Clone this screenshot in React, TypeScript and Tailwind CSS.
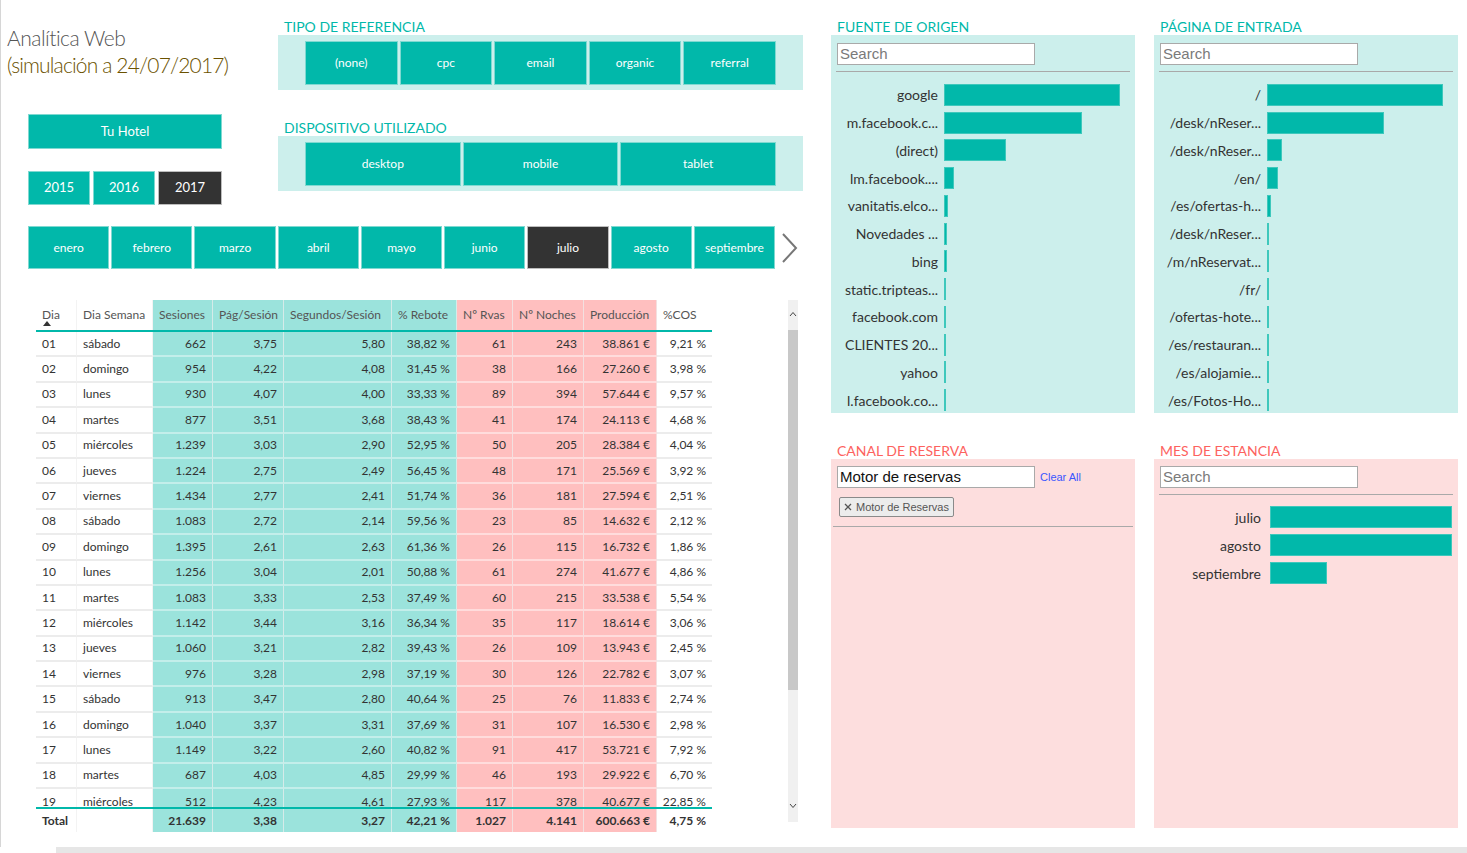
import { ReactNode } from 'react';

const TEAL = 'bg-[#01b8aa]';

type Row = [string, string, string, string, string, string, string, string, string, string];

const rows: Row[] = [
    ['01', 'sábado', '662', '3,75', '5,80', '38,82 %', '61', '243', '38.861 €', '9,21 %'],
    ['02', 'domingo', '954', '4,22', '4,08', '31,45 %', '38', '166', '27.260 €', '3,98 %'],
    ['03', 'lunes', '930', '4,07', '4,00', '33,33 %', '89', '394', '57.644 €', '9,57 %'],
    ['04', 'martes', '877', '3,51', '3,68', '38,43 %', '41', '174', '24.113 €', '4,68 %'],
    ['05', 'miércoles', '1.239', '3,03', '2,90', '52,95 %', '50', '205', '28.384 €', '4,04 %'],
    ['06', 'jueves', '1.224', '2,75', '2,49', '56,45 %', '48', '171', '25.569 €', '3,92 %'],
    ['07', 'viernes', '1.434', '2,77', '2,41', '51,74 %', '36', '181', '27.594 €', '2,51 %'],
    ['08', 'sábado', '1.083', '2,72', '2,14', '59,56 %', '23', '85', '14.632 €', '2,12 %'],
    ['09', 'domingo', '1.395', '2,61', '2,63', '61,36 %', '26', '115', '16.732 €', '1,86 %'],
    ['10', 'lunes', '1.256', '3,04', '2,01', '50,88 %', '61', '274', '41.677 €', '4,86 %'],
    ['11', 'martes', '1.083', '3,33', '2,53', '37,49 %', '60', '215', '33.538 €', '5,54 %'],
    ['12', 'miércoles', '1.142', '3,44', '3,16', '36,34 %', '35', '117', '18.614 €', '3,06 %'],
    ['13', 'jueves', '1.060', '3,21', '2,82', '39,43 %', '26', '109', '13.943 €', '2,45 %'],
    ['14', 'viernes', '976', '3,28', '2,98', '37,19 %', '30', '126', '22.782 €', '3,07 %'],
    ['15', 'sábado', '913', '3,47', '2,80', '40,64 %', '25', '76', '11.833 €', '2,74 %'],
    ['16', 'domingo', '1.040', '3,37', '3,31', '37,69 %', '31', '107', '16.530 €', '2,98 %'],
    ['17', 'lunes', '1.149', '3,22', '2,60', '40,82 %', '91', '417', '53.721 €', '7,92 %'],
    ['18', 'martes', '687', '4,03', '4,85', '29,99 %', '46', '193', '29.922 €', '6,70 %'],
    ['19', 'miércoles', '512', '4,23', '4,61', '27,93 %', '117', '378', '40.677 €', '22,85 %'],
];

const totals: Row = ['Total', '', '21.639', '3,38', '3,27', '42,21 %', '1.027', '4.141', '600.663 €', '4,75 %'];

const headers = ['Dia', 'Dia Semana', 'Sesiones', 'Pág/Sesión', 'Segundos/Sesión', '% Rebote', 'Nº Rvas', 'Nº Noches', 'Producción', '%COS'];

// column widths and tint group: w = white, t = teal, p = pink
const cols: { w: string; tone: 'w' | 't' | 'p' }[] = [
    { w: 'w-[41px]', tone: 'w' },
    { w: 'w-[76px]', tone: 'w' },
    { w: 'w-[60px]', tone: 't' },
    { w: 'w-[71px]', tone: 't' },
    { w: 'w-[108px]', tone: 't' },
    { w: 'w-[65px]', tone: 't' },
    { w: 'w-[56px]', tone: 'p' },
    { w: 'w-[71px]', tone: 'p' },
    { w: 'w-[73px]', tone: 'p' },
    { w: 'w-[55px]', tone: 'w' },
];

const toneBg = { w: 'bg-white', t: 'bg-[#9be3dc]', p: 'bg-[#ffbfbf]' };
const toneLine = { w: 'border-[#ececec]', t: 'border-[#c3eeea]', p: 'border-[#ffdcdc]' };

const fuente: [string, number][] = [
    ['google', 176], ['m.facebook.c...', 138], ['(direct)', 62], ['lm.facebook....', 10],
    ['vanitatis.elco...', 4], ['Novedades ...', 3], ['bing', 3], ['static.tripteas...', 2],
    ['facebook.com', 2], ['CLIENTES 20...', 1], ['yahoo', 1], ['l.facebook.co...', 1],
];

const pagina: [string, number][] = [
    ['/', 176], ['/desk/nReser...', 117], ['/desk/nReser...', 15], ['/en/', 11],
    ['/es/ofertas-h...', 4], ['/desk/nReser...', 2], ['/m/nReservat...', 2], ['/fr/', 2],
    ['/ofertas-hote...', 1], ['/es/restauran...', 1], ['/es/alojamie...', 1], ['/es/Fotos-Ho...', 1],
];

const meses = ['enero', 'febrero', 'marzo', 'abril', 'mayo', 'junio', 'julio', 'agosto', 'septiembre'];

function Tile({ label, dark, className = '' }: { label: string; dark?: boolean; className?: string }) {
    return (
        <div
            className={`flex items-center justify-center text-[12px] text-white border ${
                dark ? 'bg-[#333333] border-[#bdbdbd]' : `${TEAL} border-[#7fd9d1]`
            } ${className}`}
        >
            {label}
        </div>
    );
}

function SlicerTitle({ children, red }: { children: ReactNode; red?: boolean }) {
    return (
        <div className={`h-[16px] leading-[16px] pl-[6px] text-[14px] ${red ? 'text-[#fd625e]' : 'text-[#01b8aa]'}`}>
            {children}
        </div>
    );
}

function SearchBox({ value }: { value?: string }) {
    return (
        <div className="w-[198px] h-[22px] bg-white border border-[#a9a9a9] flex items-center px-[2px] font-['Liberation_Sans',Arial,sans-serif] text-[15px]">
            <span className={value ? 'text-[#111]' : 'text-[#7a7a7a]'}>{value ?? 'Search'}</span>
        </div>
    );
}

function BarList({ items, labelW, gap }: { items: [string, number][]; labelW: string; gap: string }) {
    return (
        <div className="flex flex-col">
            {items.map(([label, w], i) => (
                <div key={i} className="h-[27.75px] flex items-center">
                    <div className={`${labelW} text-right text-[14px] text-[#333] whitespace-nowrap`}>{label}</div>
                    <div className={`${gap} h-[22px] bg-[#01b8aa] border border-[#3ec8bc]`} style={{ width: w }} />
                </div>
            ))}
        </div>
    );
}

function TableRow({ r, bold, last }: { r: Row; bold?: boolean; last?: boolean }) {
    return (
        <div className={`flex ${bold ? 'h-[23px] font-bold' : 'h-[25.4px]'}`}>
            {r.map((v, i) => {
                const c = cols[i];
                const right = i >= 2;
                return (
                    <div
                        key={i}
                        className={`${c.w} shrink-0 ${toneBg[c.tone]} ${bold || last ? '' : `border-b-2 ${toneLine[c.tone]}`} ${
                            i < 9 ? 'border-r border-r-[#eeeeee]/70' : ''
                        } flex items-center ${right ? 'justify-end pr-[6px]' : 'pl-[6px]'}`}
                    >
                        {v}
                    </div>
                );
            })}
        </div>
    );
}

function DataTable() {
    return (
        <div className="w-[676px] text-[12px] text-[#333]">
            <div className="flex h-[32px] border-b-2 border-[#01b8aa] text-[#555]">
                {headers.map((h, i) => (
                    <div
                        key={h}
                        className={`${cols[i].w} shrink-0 ${toneBg[cols[i].tone]} ${
                            i < 9 ? 'border-r border-r-[#eeeeee]/70' : ''
                        } pl-[6px] flex flex-col justify-center relative`}
                    >
                        <span className="whitespace-nowrap">{h}</span>
                        {i === 0 && (
                            <svg className="absolute left-[7px] top-[21px]" width="8" height="5" viewBox="0 0 8 5">
                                <path d="M0 5 L4 0 L8 5 Z" fill="#333" />
                            </svg>
                        )}
                    </div>
                ))}
            </div>
            <div className="h-[475px] overflow-hidden">
                {rows.map((r, i) => (
                    <TableRow key={r[0]} r={r} last={i === rows.length - 1} />
                ))}
            </div>
            <div className="border-t-2 border-[#01b8aa]">
                <TableRow r={totals} bold />
            </div>
        </div>
    );
}

export default function App() {
    return (
        <div className="w-[1467px] h-[853px] overflow-hidden bg-white font-[Lato,'Open_Sans',sans-serif] flex flex-col">
            <div className="h-[847px] flex border-l border-[#d6d6d6]">
                {/* left side: title, filters, month strip and the daily table */}
                <div className="w-[830px] shrink-0">
                    <div className="flex h-[205px]">
                        <div className="w-[277px] shrink-0 pl-[6px] pt-[24px]">
                            <div className="text-[21px] leading-[27px] tracking-[-0.5px] text-[#555] font-light">Analítica Web</div>
                            <div className="text-[21px] leading-[27px] tracking-[-0.85px] text-[#6b5200] font-light whitespace-nowrap">(simulación a 24/07/2017)</div>
                            <Tile label="Tu Hotel" className="ml-[21px] mt-[36px] w-[194px] h-[35px] text-[13px]" />
                            <div className="ml-[21px] mt-[22px] flex gap-[3px]">
                                <Tile label="2015" className="w-[62px] h-[34px] text-[13px]" />
                                <Tile label="2016" className="w-[62px] h-[34px] text-[13px]" />
                                <Tile label="2017" dark className="w-[64px] h-[34px] text-[13px]" />
                            </div>
                        </div>
                        <div className="w-[525px] shrink-0 pt-[19px]">
                            <SlicerTitle>TIPO DE REFERENCIA</SlicerTitle>
                            <div className="h-[55px] bg-[#ccefec] px-[27px] pt-[6px] flex gap-[2px]">
                                {['(none)', 'cpc', 'email', 'organic', 'referral'].map((t) => (
                                    <Tile key={t} label={t} className="flex-1 h-[44px]" />
                                ))}
                            </div>
                            <div className="mt-[30px]">
                                <SlicerTitle>DISPOSITIVO UTILIZADO</SlicerTitle>
                            </div>
                            <div className="h-[55px] bg-[#ccefec] px-[27px] pt-[6px] flex gap-[2px]">
                                {['desktop', 'mobile', 'tablet'].map((t) => (
                                    <Tile key={t} label={t} className="flex-1 h-[44px]" />
                                ))}
                            </div>
                        </div>
                    </div>

                    <div className="mt-[21px] pl-[27px] flex items-center">
                        <div className="w-[747px] h-[43px] flex gap-[2px]">
                            {meses.map((m) => (
                                <Tile key={m} label={m} dark={m === 'julio'} className="flex-1 h-[43px]" />
                            ))}
                        </div>
                        <svg className="ml-[6px]" width="17" height="30" viewBox="0 0 17 30">
                            <polyline points="2,1 15,15 2,29" fill="none" stroke="#777" strokeWidth="2" />
                        </svg>
                    </div>

                    <div className="mt-[31px] flex">
                        <div className="ml-[35px]">
                            <DataTable />
                        </div>
                        <div className="ml-[76px] w-[10px] h-[522px] bg-[#f0f0f0] flex flex-col items-center">
                            <svg className="mt-[11px]" width="8" height="6" viewBox="0 0 8 6">
                                <polyline points="1,5 4,1.5 7,5" fill="none" stroke="#444" strokeWidth="1" />
                            </svg>
                            <div className="mt-[13px] w-full h-[360px] bg-[#c8c8c8]" />
                            <svg className="mt-[113px]" width="8" height="6" viewBox="0 0 8 6">
                                <polyline points="1,1 4,4.5 7,1" fill="none" stroke="#444" strokeWidth="1" />
                            </svg>
                        </div>
                    </div>
                </div>

                {/* right side: source, landing page, channel and month slicers */}
                <div className="flex gap-[19px]">
                    <div className="w-[304px] pt-[19px]">
                        <SlicerTitle>FUENTE DE ORIGEN</SlicerTitle>
                        <div className="h-[378px] bg-[#ccefec] pt-[8px]">
                            <div className="ml-[6px]"><SearchBox /></div>
                            <div className="mt-[6px] mx-[5px] h-px bg-[#a9a9a9]" />
                            <div className="mt-[9px]">
                                <BarList items={fuente} labelW="w-[107px]" gap="ml-[6px]" />
                            </div>
                        </div>
                        <div className="mt-[30px]">
                            <SlicerTitle red>CANAL DE RESERVA</SlicerTitle>
                        </div>
                        <div className="h-[369px] bg-[#fddede] pt-[7px]">
                            <div className="ml-[6px] flex items-center">
                                <SearchBox value="Motor de reservas" />
                                <span className="ml-[5px] text-[11px] text-[#3a57ff] font-['Liberation_Sans',Arial,sans-serif]">Clear All</span>
                            </div>
                            <div className="ml-[8px] mt-[9px] w-fit h-[20px] flex items-center gap-[4px] px-[4px] bg-[#ececec] border border-[#8a8a8a] rounded-[2px] text-[11px] text-[#555] whitespace-nowrap font-['Liberation_Sans',Arial,sans-serif]">
                                <svg width="8" height="8" viewBox="0 0 8 8">
                                    <path d="M1 1 L7 7 M7 1 L1 7" stroke="#555" strokeWidth="1.3" />
                                </svg>
                                <span>Motor de Reservas</span>
                            </div>
                            <div className="mt-[9px] mx-[2px] h-px bg-[#a9a9a9]" />
                        </div>
                    </div>

                    <div className="w-[304px] pt-[19px]">
                        <SlicerTitle>PÁGINA DE ENTRADA</SlicerTitle>
                        <div className="h-[378px] bg-[#ccefec] pt-[8px]">
                            <div className="ml-[6px]"><SearchBox /></div>
                            <div className="mt-[6px] mx-[5px] h-px bg-[#a9a9a9]" />
                            <div className="mt-[9px]">
                                <BarList items={pagina} labelW="w-[107px]" gap="ml-[6px]" />
                            </div>
                        </div>
                        <div className="mt-[30px]">
                            <SlicerTitle red>MES DE ESTANCIA</SlicerTitle>
                        </div>
                        <div className="h-[369px] bg-[#fddede] pt-[7px]">
                            <div className="ml-[6px]"><SearchBox /></div>
                            <div className="mt-[6px] mx-[5px] h-px bg-[#a9a9a9]" />
                            <div className="mt-[8px] flex flex-col">
                                {[['julio', 182], ['agosto', 182], ['septiembre', 57]].map(([m, w]) => (
                                    <div key={m} className="h-[28px] flex items-center">
                                        <div className="w-[107px] text-right text-[14px] text-[#333]">{m}</div>
                                        <div className="ml-[9px] h-[22px] bg-[#01b8aa] border border-[#3ec8bc]" style={{ width: Number(w) }} />
                                    </div>
                                ))}
                            </div>
                        </div>
                    </div>
                </div>
            </div>
            <div className="ml-[56px] h-[6px] bg-[#e6e6e6]" />
        </div>
    );
}
